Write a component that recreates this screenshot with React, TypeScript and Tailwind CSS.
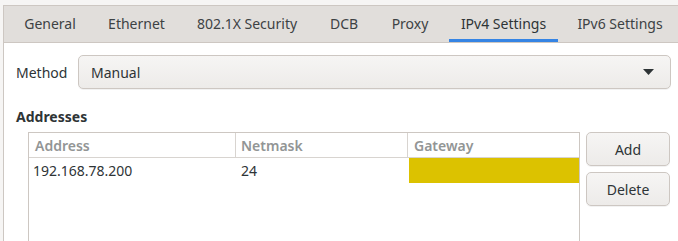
import React from "react";

const tabs = [
  { label: "General", w: "w-[76px]" },
  { label: "Ethernet", w: "w-[81px]" },
  { label: "802.1X Security", w: "w-[124px]" },
  { label: "DCB", w: "w-[54px]" },
  { label: "Proxy", w: "w-[62px]" },
  { label: "IPv4 Settings", w: "w-[109px]", active: true },
  { label: "IPv6 Settings", w: "w-[108px]" },
];

export default function App() {
  return (
    <div
      className="w-[678px] h-[241px] overflow-hidden bg-[#f6f5f4] text-[#2e3436] text-[14px]"
      style={{ fontFamily: '"Noto Sans", "Open Sans", sans-serif' }}
    >
      <div className="ml-[3px] mt-[5px] w-[700px] h-[300px] border-l border-t border-[#cdc7c2] bg-white flex flex-col">
        {/* tab bar */}
        <div className="h-[37px] bg-[#e1dedb] border-b border-[#cdc7c2] flex items-stretch pl-2 gap-2 shrink-0">
          {tabs.map((t) => (
            <div
              key={t.label}
              className={`${t.w} shrink-0 flex items-center justify-center relative ${
                t.active ? "text-[#2e3436]" : "text-[#3d4244]"
              }`}
            >
              <span className="-mt-[1px] whitespace-nowrap">{t.label}</span>
              {t.active && (
                <div className="absolute left-0 right-0 bottom-0 h-[3px] bg-[#3584e4]" />
              )}
            </div>
          ))}
        </div>

        {/* content */}
        <div className="w-[675px] pl-3 pr-2 pt-3 flex flex-col">
          <div className="flex items-center gap-3">
            <span className="w-[50px]">Method</span>
            <div className="flex-1 h-[34px] rounded-[5px] border border-[#cdc7c2] bg-gradient-to-b from-[#f6f5f4] to-[#edebe9] shadow-[0_1px_0_rgba(0,0,0,0.05)] flex items-center justify-between pl-3 pr-[16px]">
              <span>Manual</span>
              <svg width="11" height="6" viewBox="0 0 11 6">
                <polygon points="0,0 11,0 5.5,6" fill="#2e3436" />
              </svg>
            </div>
          </div>

          <div className="mt-[18px] font-bold leading-[20px]">Addresses</div>

          <div className="mt-[5px] ml-3 flex gap-[6px]">
            <div className="w-[552px] h-[140px] border border-[#cdc7c2] bg-white flex flex-col">
              <div className="h-[25px] flex border-b border-[#d8d4d0] text-[#929595] font-semibold">
                <div className="w-[207px] pl-[6px] flex items-center border-r border-[#d8d4d0]">Address</div>
                <div className="w-[172px] pl-[5px] flex items-center border-r border-[#d8d4d0]">Netmask</div>
                <div className="flex-1 pl-[6px] flex items-center">Gateway</div>
              </div>
              <div className="h-[25px] flex">
                <div className="w-[208px] pl-[4px] flex items-center">192.168.78.200</div>
                <div className="w-[172px] pl-[4px] flex items-center">24</div>
                <div className="flex-1 bg-[#dcc200]" />
              </div>
            </div>
            <div className="w-[84px] flex flex-col gap-[6px]">
              <button className="h-[34px] rounded-[5px] border border-[#cdc7c2] bg-gradient-to-b from-[#f6f5f4] to-[#edebe9] shadow-[0_1px_0_rgba(0,0,0,0.05)]">
                Add
              </button>
              <button className="h-[34px] rounded-[5px] border border-[#cdc7c2] bg-gradient-to-b from-[#f6f5f4] to-[#edebe9] shadow-[0_1px_0_rgba(0,0,0,0.05)]">
                Delete
              </button>
            </div>
          </div>
        </div>
      </div>
    </div>
  );
}
